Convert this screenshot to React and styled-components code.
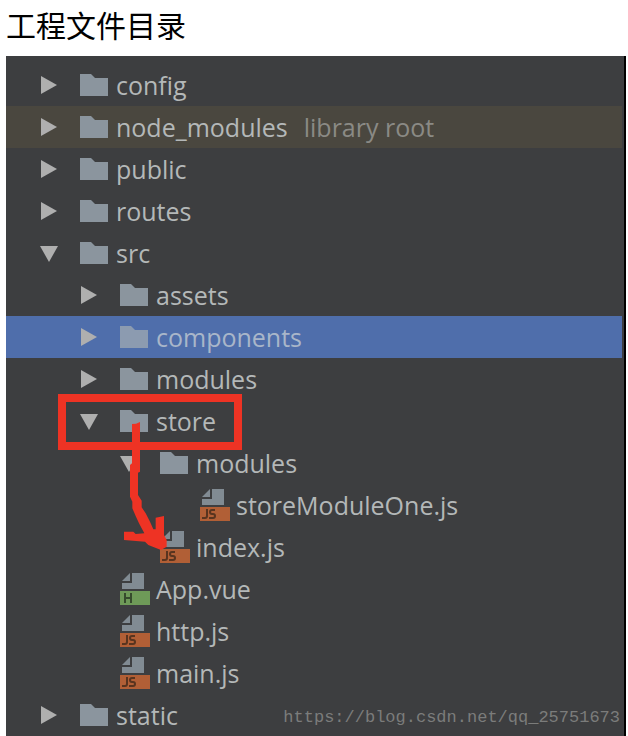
import styled, { createGlobalStyle } from "styled-components";

const GlobalStyle = createGlobalStyle`
  * {
    box-sizing: border-box;
  }

  body {
    margin: 0;
    background: #ffffff;
  }
`;

const Page = styled.main`
  padding: 0 2px 0 6px;
`;

const Title = styled.h1`
  margin: 0;
  padding: 4px 0 12px;
  font-family: "Noto Sans CJK SC", sans-serif;
  font-size: 30px;
  font-weight: 400;
  line-height: 40px;
  color: #000000;
`;

const Panel = styled.section`
  position: relative;
  padding: 8px 2px 0 0;
  background: #3d3e40;
  border-right: 2px solid #000000;
`;

const Tree = styled.ul`
  margin: 0;
  padding: 0;
  list-style: none;
`;

const backgrounds = {
  library: "#4a473f",
  selected: "#4f6eab",
};

const Row = styled.li`
  display: flex;
  align-items: center;
  height: 42px;
  padding-left: ${({ $depth }) => 34 + $depth * 40}px;
  background: ${({ $tone }) => backgrounds[$tone] || "transparent"};
`;

const Toggle = styled.button`
  display: flex;
  width: 40px;
  padding: 0;
  border: none;
  background: none;
  cursor: pointer;
`;

const Indent = styled.span`
  width: 40px;
`;

const IconSlot = styled.span`
  display: flex;
  width: 36px;
`;

const Name = styled.span`
  font-family: "Open Sans", "Noto Sans", sans-serif;
  font-size: 25px;
  line-height: 40px;
  white-space: nowrap;
  color: ${({ $tone }) => ($tone === "selected" ? "#a9b6c9" : "#b4b8b8")};
`;

const Note = styled(Name)`
  margin-left: 16px;
  color: #8a8a85;
`;

const StoreBox = styled.div`
  position: absolute;
  top: 338px;
  left: 52px;
  width: 184px;
  height: 56px;
  border: 8px solid #ee3324;
`;

const Pointer = styled.svg`
  position: absolute;
  top: 354px;
  left: 104px;
  width: 120px;
  height: 160px;
`;

const Watermark = styled.span`
  position: absolute;
  right: 4px;
  bottom: 6px;
  font-family: "Liberation Mono", monospace;
  font-size: 17px;
  line-height: 24px;
  color: #7b7c7b;
`;

const Triangle = ({ open }) => (
  <svg width="20" height="20" viewBox="0 0 20 20" aria-hidden="true">
    <path d={open ? "M0 3H18L9 19Z" : "M1 1V19L17 10Z"} fill="#afafaf" />
  </svg>
);

const FolderIcon = ({ tone }) => (
  <svg width="28" height="22" viewBox="0 0 28 22" aria-hidden="true">
    <path
      d="M0 0H11L15 4H28V22H0Z"
      fill={tone === "selected" ? "#8c9bb0" : "#8b959e"}
    />
  </svg>
);

const badges = {
  js: {
    fill: "#b15f36",
    ink: "#58341f",
    d: "M7 20V27Q7 29 5 29H2M15 21H12Q10 21 10 23Q10 25 12 25H13Q15 25 15 27Q15 29 13 29H9",
  },
  vue: { fill: "#6e9a58", ink: "#364b2d", d: "M5 20V30M11 20V30M5 25H11" },
};

const FileIcon = ({ type }) => {
  const badge = badges[type];
  return (
    <svg width="30" height="32" viewBox="0 0 30 32" aria-hidden="true">
      <path d="M12 0H24V16H2V10H12Z" fill="#818b93" />
      <path d="M2 8L10 0V8Z" fill="#818b93" />
      <path d="M0 18H30V32H0Z" fill={badge.fill} />
      <path d={badge.d} fill="none" stroke={badge.ink} strokeWidth="2" />
    </svg>
  );
};

const items = [
  { name: "config", depth: 0 },
  { name: "node_modules", depth: 0, note: "library root", tone: "library" },
  { name: "public", depth: 0 },
  { name: "routes", depth: 0 },
  { name: "src", depth: 0, open: true },
  { name: "assets", depth: 1 },
  { name: "components", depth: 1, tone: "selected" },
  { name: "modules", depth: 1 },
  { name: "store", depth: 1, open: true },
  { name: "modules", depth: 2, open: true },
  { name: "storeModuleOne.js", depth: 3, type: "js" },
  { name: "index.js", depth: 2, type: "js" },
  { name: "App.vue", depth: 1, type: "vue" },
  { name: "http.js", depth: 1, type: "js" },
  { name: "main.js", depth: 1, type: "js" },
  { name: "static", depth: 0 },
];

const TreeItem = ({ name, depth, note, tone, open, type }) => (
  <Row $depth={depth} $tone={tone}>
    {type ? (
      <Indent />
    ) : (
      <Toggle type="button" aria-label={`Toggle ${name}`} aria-expanded={!!open}>
        <Triangle open={open} />
      </Toggle>
    )}
    <IconSlot>
      {type ? <FileIcon type={type} /> : <FolderIcon tone={tone} />}
    </IconSlot>
    <Name $tone={tone}>{name}</Name>
    {note && <Note>{note}</Note>}
  </Row>
);

export default function App() {
  return (
    <>
      <GlobalStyle />
      <Page>
        <Title>工程文件目录</Title>
        <Panel>
          <Tree>
            {items.map((item, index) => (
              <TreeItem key={index} {...item} />
            ))}
          </Tree>
          <StoreBox />
          <Pointer viewBox="0 0 360 480" aria-hidden="true">
            <path
              d="M66 42L78 41L90 36L90 185L84 188L84 255L95 272L95 292L107 310L120 335L130 358L137 358L137 323L162 318L162 375L170 390L170 410L153 420L115 405L105 395L42 390L42 365L70 365L77 372L103 370L87 340L78 320L67 295L67 275L60 260L60 165L66 160Z"
              fill="#ee3324"
            />
          </Pointer>
          <Watermark>https://blog.csdn.net/qq_25751673</Watermark>
        </Panel>
      </Page>
    </>
  );
}
